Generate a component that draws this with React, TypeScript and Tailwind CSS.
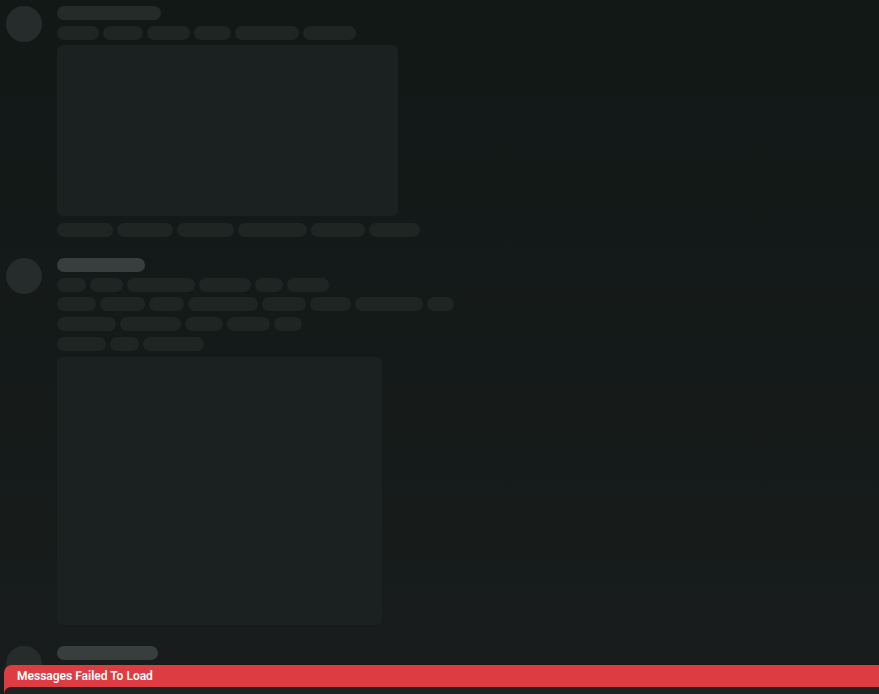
import React from 'react';

type Msg = {
  name: number;
  nameTone: 'dim' | 'bright';
  rows: number[][];
  image?: { w: number; h: number };
  after?: number[][];
};

const MESSAGES: Msg[] = [
  {
    name: 104,
    nameTone: 'dim',
    rows: [[42, 40, 43, 37, 64, 53]],
    image: { w: 341, h: 171 },
    after: [[56, 56, 57, 69, 54, 51]],
  },
  {
    name: 88,
    nameTone: 'bright',
    rows: [
      [29, 33, 68, 52, 28, 42],
      [39, 45, 35, 70, 44, 41, 68, 27],
      [59, 61, 38, 43, 28],
      [49, 29, 61],
    ],
    image: { w: 325, h: 268 },
  },
  {
    name: 101,
    nameTone: 'bright',
    rows: [[42, 40, 43, 37, 64, 53]],
  },
];

function PillRow({ widths }: { widths: number[] }) {
  return (
    <div className="flex gap-1 h-[14px]">
      {widths.map((w, i) => (
        <div key={i} className="h-[14px] rounded-full bg-[#1f2523]" style={{ width: w }} />
      ))}
    </div>
  );
}

function Skeleton({ msg }: { msg: Msg }) {
  return (
    <div className="flex pl-[6px]">
      <div className="w-9 h-9 rounded-full bg-[#262c2b] flex-shrink-0" />
      <div className="ml-[15px] flex flex-col gap-[5.7px]">
        <div
          className={`h-[14px] rounded-full ${
            msg.nameTone === 'dim' ? 'bg-[#242b29]' : 'bg-[#383e3d]'
          }`}
          style={{ width: msg.name }}
        />
        {msg.rows.map((r, i) => (
          <PillRow key={i} widths={r} />
        ))}
        {msg.image && (
          <div
            className="rounded-md bg-[#1b2120]"
            style={{ width: msg.image.w, height: msg.image.h }}
          />
        )}
        {msg.after?.map((r, i) => (
          <div key={i} className="mt-[1px]">
            <PillRow widths={r} />
          </div>
        ))}
      </div>
    </div>
  );
}

export default function App() {
  return (
    <div className="relative w-[879px] h-[694px] overflow-hidden bg-gradient-to-b from-[#111816] to-[#181c1c]">
      <div className="flex flex-col gap-[21px] pt-[6px]">
        {MESSAGES.map((m, i) => (
          <Skeleton key={i} msg={m} />
        ))}
      </div>

      {/* error banner over the composer */}
      <div className="absolute bottom-0 left-[4px] right-0 bg-[#dd3c42] rounded-tl-lg">
        <div
          className="h-[22px] flex items-center pl-[13px] text-white text-[12px] font-semibold"
          style={{ fontFamily: 'Roboto, "Noto Sans", sans-serif' }}
        >
          Messages Failed To Load
        </div>
        <div className="h-[7px] bg-[#1f2423] rounded-tl-lg" />
      </div>
    </div>
  );
}
